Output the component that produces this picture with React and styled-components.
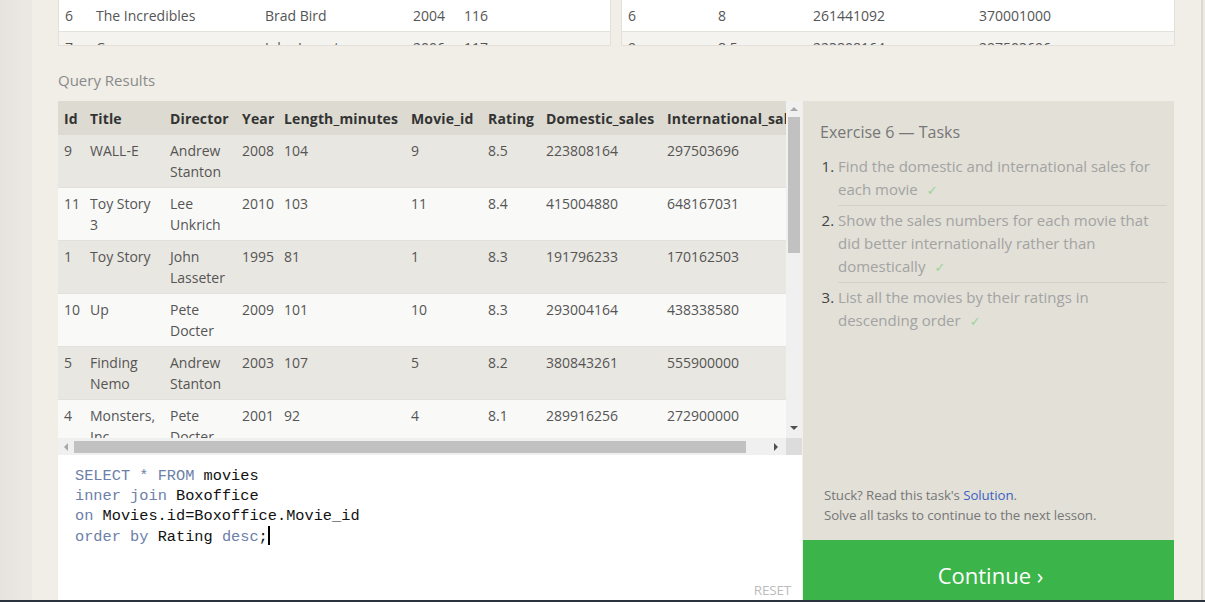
import React from 'react';
import styled, { createGlobalStyle } from 'styled-components';

const GlobalStyle = createGlobalStyle`
    html, body {
        margin: 0;
        padding: 0;
        background: #e8e5e0;
        overflow: hidden;
    }
    * { box-sizing: border-box; }
`

const Screen = styled.div`
    width: 1205px;
    height: 602px;
    display: flex;
    flex-direction: column;
    font-family: "Open Sans", "Liberation Sans", sans-serif;
`

const Workspace = styled.div`
    flex: 1;
    display: flex;
    min-height: 0;
`

const LeftGutter = styled.div`
    width: 32px;
    background: linear-gradient(to right, #e6e3df, #ebe8e3 80%, #eae7e1);
`

const RightGutter = styled.div`
    flex: 1;
    background: #ece9e3;
    border-left: 2px solid #dcd8d2;
`

const Main = styled.div`
    width: 1169px;
    background: #f0eee7;
    padding: 0 26px;
    display: flex;
    flex-direction: column;
`

const Taskbar = styled.div`
    height: 2px;
    background: #2a323d;
`

/* top tables (scrolled to their last rows) */
const TopTables = styled.div`
    display: flex;
    gap: 10px;
`

const TopTable = styled.div`
    width: ${p => p.width}px;
    height: 46px;
    overflow: hidden;
    background: #f4f3ef;
    border: 1px solid #e2e0d9;
    border-top: none;
`

const TopRow = styled.div`
    display: grid;
    grid-template-columns: ${p => p.cols};
    height: 32px;
    align-items: center;
    background: ${p => p.shade ? '#f4f3ef' : '#ffffff'};
    border-bottom: 1px solid #e4e2dc;
    font-size: 14px;
    color: #555;
    span { padding-left: 6px; white-space: nowrap; }
`

const SectionLabel = styled.div`
    margin-top: 23px;
    height: 32px;
    font-size: 15px;
    line-height: 22px;
    color: #8a8a8a;
`

/* results area */
const ResultsRow = styled.div`
    flex: 1;
    display: flex;
    gap: 1px;
    min-height: 0;
`

const LeftColumn = styled.div`
    width: 744px;
    display: flex;
    flex-direction: column;
`

const TableViewport = styled.div`
    height: 337px;
    display: flex;
`

const TableClip = styled.div`
    width: 728px;
    overflow: hidden;
    background: #f9f9f8;
`

const Table = styled.table`
    border-collapse: collapse;
    table-layout: fixed;
    width: 763px;
    font-size: 14px;
    color: #555;
`

const HeadCell = styled.th`
    height: 34px;
    padding: 0 6px;
    text-align: left;
    font-weight: 700;
    letter-spacing: 0.15px;
    color: #333;
    background: #dcdad1;
    white-space: nowrap;
    overflow: hidden;
`

const BodyRow = styled.tr`
    background: ${p => p.shade ? '#e9e7e1' : '#f9f9f8'};
    border-bottom: 1px solid #e2e0da;
`

const Cell = styled.td`
    padding: 5px 6px 5px;
    line-height: 21px;
    vertical-align: top;
`

const VScroll = styled.div`
    width: 16px;
    background: #f0f0f0;
    display: flex;
    flex-direction: column;
    align-items: center;
`

const HScroll = styled.div`
    height: 17px;
    background: #f0f0f0;
    display: flex;
    align-items: center;
`

const ArrowBox = styled.div`
    width: 16px;
    height: 16px;
    display: flex;
    align-items: center;
    justify-content: center;
    flex-shrink: 0;
    margin-left: ${p => p.gap || 0}px;
    margin-top: ${p => p.pushDown ? 'auto' : '0'};
    margin-bottom: ${p => p.pushDown ? '2px' : '0'};
`

const VThumb = styled.div`
    width: 12px;
    height: 136px;
    background: #c1c1c1;
`

const HThumb = styled.div`
    width: 672px;
    height: 12px;
    background: #c1c1c1;
`

const Corner = styled.div`
    width: 16px;
    height: 17px;
    margin-left: auto;
    background: #dcdcdc;
`

const Editor = styled.div`
    flex: 1;
    background: #ffffff;
    padding: 11px 12px 0 17px;
    display: flex;
    flex-direction: column;
    font-family: "Liberation Mono", "DejaVu Sans Mono", monospace;
    font-size: 15.3px;
    line-height: 20px;
    color: #111;
`

const CodeLine = styled.div`
    white-space: pre;
`

const Kw = styled.span`
    color: #6c80a9;
`

const Caret = styled.span`
    display: inline-block;
    width: 2px;
    height: 19px;
    background: #000;
    vertical-align: -4px;
`

const ResetButton = styled.div`
    margin-top: auto;
    align-self: flex-end;
    font-family: "Open Sans", "Liberation Sans", sans-serif;
    font-size: 13.5px;
    letter-spacing: -0.2px;
    line-height: 20px;
    color: #bcbcbc;
    margin-right: -1px;
`

/* tasks side */
const SideColumn = styled.div`
    width: 371px;
    display: flex;
    flex-direction: column;
`

const TaskPanel = styled.div`
    flex: 1;
    background: #e2e0d7;
    padding: 20px 7px 15px 17px;
    display: flex;
    flex-direction: column;
`

const TaskTitle = styled.div`
    font-size: 16px;
    line-height: 22px;
    color: #777;
`

const TaskList = styled.ol`
    margin: 9px 0 0;
    padding-left: 18px;
`

const TaskItem = styled.li`
    font-size: 15px;
    line-height: 23px;
    color: #a3a3a3;
    padding: 3px 0;
    border-top: ${p => p.first ? 'none' : '1px solid #d3d1c7'};
    &::marker { color: #444; }
`

const Check = styled.span`
    color: #9ad59a;
    margin-left: 9px;
    font-family: "DejaVu Sans", sans-serif;
    font-size: 13px;
`

const Help = styled.div`
    margin-top: auto;
    padding-left: 4px;
    font-size: 13.3px;
    letter-spacing: -0.1px;
    line-height: 20px;
    color: #777;
    a { color: #3a62c4; text-decoration: none; }
`

const ContinueButton = styled.div`
    height: 60px;
    background: #3bb54a;
    color: #fff;
    font-size: 22px;
    display: flex;
    align-items: center;
    justify-content: center;
    padding-top: 10px;
    padding-left: 4px;
`

function Triangle({ dir, color }) {
    const pts = {
        up: '0,4 4,0 8,4',
        down: '0,0 8,0 4,4',
        left: '4,0 4,8 0,4',
        right: '0,0 4,4 0,8',
    }[dir];
    const vertical = dir === 'up' || dir === 'down';
    return (
        <svg width={vertical ? 8 : 4} height={vertical ? 4 : 8} viewBox={vertical ? '0 0 8 4' : '0 0 4 8'}>
            <polygon points={pts} fill={color} />
        </svg>
    );
}

const movies = [
    ['9', 'WALL-E', 'Andrew Stanton', '2008', '104', '9', '8.5', '223808164', '297503696'],
    ['11', 'Toy Story 3', 'Lee Unkrich', '2010', '103', '11', '8.4', '415004880', '648167031'],
    ['1', 'Toy Story', 'John Lasseter', '1995', '81', '1', '8.3', '191796233', '170162503'],
    ['10', 'Up', 'Pete Docter', '2009', '101', '10', '8.3', '293004164', '438338580'],
    ['5', 'Finding Nemo', 'Andrew Stanton', '2003', '107', '5', '8.2', '380843261', '555900000'],
    ['4', 'Monsters, Inc.', 'Pete Docter', '2001', '92', '4', '8.1', '289916256', '272900000'],
    ['3', 'Cars', 'John Lasseter', '2006', '117', '3', '7.9', '245852179', '239163000'],
];

const headers = ['Id', 'Title', 'Director', 'Year', 'Length_minutes', 'Movie_id', 'Rating', 'Domestic_sales', 'International_sales'];
const widths = [26, 80, 72, 42, 127, 77, 58, 121, 160];

const leftCols = '31px 169px 148px 51px 1fr';
const rightCols = '90px 95px 166px 1fr';

export default function App() {
    return (
        <Screen>
            <GlobalStyle />
            <Workspace>
                <LeftGutter />
                <Main>
                    <TopTables>
                        <TopTable width={553}>
                            <TopRow cols={leftCols}>
                                <span>6</span><span>The Incredibles</span><span>Brad Bird</span><span>2004</span><span>116</span>
                            </TopRow>
                            <TopRow cols={leftCols} shade>
                                <span>7</span><span>Cars</span><span>John Lasseter</span><span>2006</span><span>117</span>
                            </TopRow>
                        </TopTable>
                        <TopTable width={554}>
                            <TopRow cols={rightCols}>
                                <span>6</span><span>8</span><span>261441092</span><span>370001000</span>
                            </TopRow>
                            <TopRow cols={rightCols} shade>
                                <span>9</span><span>8.5</span><span>223808164</span><span>297503696</span>
                            </TopRow>
                        </TopTable>
                    </TopTables>

                    <SectionLabel>Query Results</SectionLabel>

                    <ResultsRow>
                        <LeftColumn>
                            <TableViewport>
                                <TableClip>
                                    <Table>
                                        <colgroup>
                                            {widths.map((w, i) => <col key={i} style={{ width: w }} />)}
                                        </colgroup>
                                        <thead>
                                            <tr>
                                                {headers.map(h => <HeadCell key={h}>{h}</HeadCell>)}
                                            </tr>
                                        </thead>
                                        <tbody>
                                            {movies.map((row, i) => (
                                                <BodyRow key={row[0]} shade={i % 2 === 0}>
                                                    {row.map((c, j) => <Cell key={j}>{c}</Cell>)}
                                                </BodyRow>
                                            ))}
                                        </tbody>
                                    </Table>
                                </TableClip>
                                <VScroll>
                                    <ArrowBox><Triangle dir="up" color="#a8a8a8" /></ArrowBox>
                                    <VThumb />
                                    <ArrowBox pushDown><Triangle dir="down" color="#505050" /></ArrowBox>
                                </VScroll>
                            </TableViewport>
                            <HScroll>
                                <ArrowBox><Triangle dir="left" color="#a8a8a8" /></ArrowBox>
                                <HThumb />
                                <ArrowBox gap={22}><Triangle dir="right" color="#505050" /></ArrowBox>
                                <Corner />
                            </HScroll>
                            <Editor>
                                <CodeLine><Kw>SELECT</Kw> <Kw>*</Kw> <Kw>FROM</Kw> movies</CodeLine>
                                <CodeLine><Kw>inner</Kw> <Kw>join</Kw> Boxoffice</CodeLine>
                                <CodeLine><Kw>on</Kw> Movies.id=Boxoffice.Movie_id</CodeLine>
                                <CodeLine><Kw>order</Kw> <Kw>by</Kw> Rating <Kw>desc</Kw>;<Caret /></CodeLine>
                                <ResetButton>RESET</ResetButton>
                            </Editor>
                        </LeftColumn>

                        <SideColumn>
                            <TaskPanel>
                                <TaskTitle>Exercise 6 — Tasks</TaskTitle>
                                <TaskList>
                                    <TaskItem first>Find the domestic and international sales for each movie<Check>✓</Check></TaskItem>
                                    <TaskItem>Show the sales numbers for each movie that did better internationally rather than domestically<Check>✓</Check></TaskItem>
                                    <TaskItem>List all the movies by their ratings in descending order<Check>✓</Check></TaskItem>
                                </TaskList>
                                <Help>
                                    <div>Stuck? Read this task's <a href="#">Solution</a>.</div>
                                    <div>Solve all tasks to continue to the next lesson.</div>
                                </Help>
                            </TaskPanel>
                            <ContinueButton>Continue ›</ContinueButton>
                        </SideColumn>
                    </ResultsRow>
                </Main>
                <RightGutter />
            </Workspace>
            <Taskbar />
        </Screen>
    );
}
